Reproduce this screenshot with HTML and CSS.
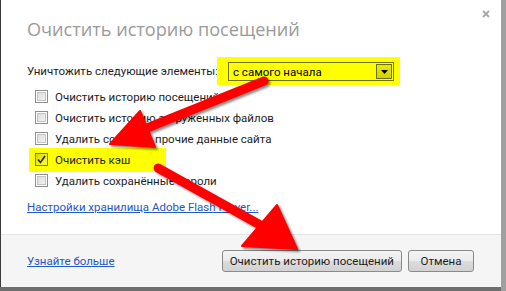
FILE: index.html
```html
<!DOCTYPE html>
<html lang="ru">
  <head>
    <meta charset="UTF-8" />
    <title>Очистить историю посещений</title>
    <link rel="stylesheet" href="styles.css">
  </head>
  <body>
    <div class="dialog">
      <div class="header">
        <h1>Очистить историю посещений</h1>
        <button class="close" aria-label="Закрыть">
          <svg width="8" height="8" viewBox="0 0 8 8">
            <path d="M1 1L7 7M7 1L1 7" stroke="#a8a8a8" stroke-width="1.8" />
          </svg>
        </button>
      </div>

      <div class="range-row">
        <span class="range-label">Уничтожить следующие элементы:</span>
        <div class="mark mark-select">
          <div class="select">
            <span>с самого начала</span>
            <span class="select-btn">
              <svg width="7" height="4" viewBox="0 0 7 4"><path d="M0 0H7L3.5 4Z" fill="#000" /></svg>
            </span>
          </div>
        </div>
      </div>

      <ul class="options">
        <li><span class="checkbox"></span>Очистить историю посещений</li>
        <li><span class="checkbox"></span>Очистить историю загруженных файлов</li>
        <li><span class="checkbox"></span>Удалить cookies и прочие данные сайта</li>
        <li>
          <span class="mark mark-row">
            <span class="checkbox checked">
              <svg width="9" height="9" viewBox="0 0 9 9"><path d="M1 4.5L3.5 7.5L8 1" stroke="#2a2a10" stroke-width="1.6" fill="none" /></svg>
            </span>
            Очистить кэш
          </span>
        </li>
        <li><span class="checkbox"></span>Удалить сохранённые пароли</li>
      </ul>

      <a class="flash-link" href="#">Настройки хранилища Adobe Flash Player...</a>

      <div class="footer">
        <a href="#">Узнайте больше</a>
        <div class="buttons">
          <button>Очистить историю посещений</button>
          <button>Отмена</button>
        </div>
      </div>
    </div>

    <!-- red arrows drawn over the screenshot -->
    <svg class="arrows" width="506" height="291" viewBox="0 0 506 291">
      <g fill="#ff0000" stroke="#ff0000">
        <line x1="264" y1="81" x2="142" y2="130" stroke-width="9" stroke-linecap="round" />
        <polygon points="110,144 155,147 140,111" stroke-width="2" stroke-linejoin="round" />
        <line x1="158" y1="168" x2="262" y2="226" stroke-width="9" stroke-linecap="round" />
        <polygon points="297,249 242,246 277,205" stroke-width="2" stroke-linejoin="round" />
      </g>
    </svg>
  </body>
</html>
```

FILE: styles.css
```css
* {
  margin: 0;
  padding: 0;
  box-sizing: border-box;
}
html,
body {
  width: 100%;
  height: 100%;
  overflow: hidden;
}
body {
  position: relative;
  background: #a0a0a0;
  font-family: Roboto, "Open Sans", sans-serif;
  font-size: 11.5px;
  color: #1e1e1e;
}
.dialog {
  width: 501px;
  height: 287px;
  display: flex;
  flex-direction: column;
  background: #fff;
  border-left: 1px solid #3a3a3a;
  box-shadow: 0 4px 0 #6e6e6e;
}
.header {
  display: flex;
  justify-content: space-between;
  align-items: flex-start;
  padding: 10px 11px 0 26px;
}
h1 {
  margin-top: 7px;
  font-family: "Open Sans", sans-serif;
  font-size: 18.1px;
  font-weight: normal;
  line-height: 24px;
  color: #9a9a9a;
}
.close {
  display: flex;
  border: none;
  background: none;
}
.range-row {
  display: flex;
  align-items: center;
  height: 28px;
  margin: 16px 0 0 26px;
}
.range-label {
  width: 190px;
  white-space: nowrap;
}
.mark {
  background: #ffff00;
}
.mark-select {
  padding: 5px 6px 4px 11px;
}
.select {
  display: flex;
  align-items: center;
  justify-content: space-between;
  width: 166px;
  height: 19px;
  padding: 0 1px 0 4px;
  border: 1px solid #727200;
  color: #000;
}
.select-btn {
  display: flex;
  align-items: center;
  justify-content: center;
  width: 16px;
  height: 15px;
  border: 1px solid #6e6e00;
  background: linear-gradient(#eaea00, #d2d200);
}
.options {
  list-style: none;
  margin: 1px 0 0 34px;
}
.options li {
  display: flex;
  align-items: center;
  height: 21px;
  white-space: nowrap;
}
.checkbox {
  display: flex;
  align-items: center;
  justify-content: center;
  width: 13px;
  height: 13px;
  margin-right: 7px;
  border: 1px solid #8e8f8f;
  background: #fff;
  box-shadow: inset 0 0 0 1px #fff, inset 0 0 0 2px #c4c4c4;
  background-image: linear-gradient(135deg, #d6d6d6, #f8f8f8);
}
.checkbox.checked {
  border-color: #7c7c3a;
  background-image: linear-gradient(135deg, #d9d900, #ffff40);
  box-shadow: none;
}
.mark-row {
  display: flex;
  align-items: center;
  height: 24px;
  margin-left: -6px;
  padding: 0 36px 0 6px;
}
.flash-link {
  display: block;
  margin: 8px 0 0 26px;
  line-height: 16px;
}
a {
  color: #2457c8;
}
.footer {
  display: flex;
  align-items: center;
  justify-content: space-between;
  height: 53px;
  margin-top: auto;
  padding: 0 27px 0 26px;
  border-top: 1px solid #e3e3e3;
  background: #f5f5f5;
}
.buttons {
  display: flex;
  gap: 6px;
}
button {
  font-family: inherit;
  cursor: pointer;
}
.buttons button {
  height: 22px;
  min-width: 66px;
  padding: 0 7px;
  font-size: 11.5px;
  color: #1e1e1e;
  border: 1px solid #8a8a8a;
  border-radius: 3px;
  background: linear-gradient(#f4f4f4 0%, #ebebeb 50%, #dcdcdc 51%, #d2d2d2 100%);
}
.arrows {
  position: absolute;
  top: 0;
  left: 0;
  pointer-events: none;
  filter: drop-shadow(2px 2px 1px rgba(0, 0, 0, 0.45));
}
```
